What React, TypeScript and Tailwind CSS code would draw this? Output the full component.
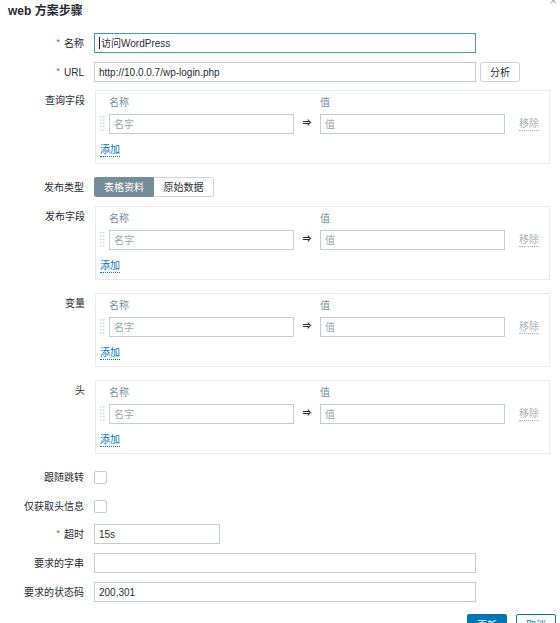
import React from "react";

const FONT = { fontFamily: '"Liberation Sans", Arial, "Noto Sans CJK SC", sans-serif' };

function Label({ text, req, top }: { text: string; req?: boolean; top?: boolean }) {
  return (
    <div
      className={`w-[85px] shrink-0 pr-[1px] flex justify-end ${top ? "items-start pt-[4px] h-[14px] leading-[14px] box-content" : "items-center h-[20px]"} text-[10px] text-[#1f2c33]`}
    >
      {req && <span className="text-[#e33734] mr-[4px] text-[9px]">*</span>}
      <span>{text}</span>
    </div>
  );
}

function TextInput({
  value,
  placeholder,
  w,
  focus,
}: {
  value?: string;
  placeholder?: string;
  w: string;
  focus?: boolean;
}) {
  return (
    <div
      className={`${w} h-[20px] border ${focus ? "border-[#4796c4]" : "border-[#c3ccd1]"} bg-white flex items-center px-[4px] text-[10px] ${value ? "text-[#1f2c33]" : "text-[#9aa5ab]"}`}
    >
      {focus && <span className="w-px h-[12px] bg-[#1f2c33] mr-px" />}
      {value ?? placeholder}
    </div>
  );
}

function DragHandle() {
  const dots = [];
  for (let r = 0; r < 5; r++) {
    for (let c = 0; c < 2; c++) {
      dots.push(<rect key={`${r}-${c}`} x={c * 3} y={r * 3.3} width="1.5" height="1.5" fill="#cdd4d8" />);
    }
  }
  return (
    <svg width="5" height="16" viewBox="0 0 5 16" className="shrink-0">
      {dots}
    </svg>
  );
}

function PairBox() {
  return (
    <div className="w-[455px] h-[74px] border border-[#e8ecee] bg-white pt-[4px] box-border">
      <div className="flex h-[14px] items-center text-[10px] text-[#768d99]">
        <span className="ml-[13px] w-[211px]">名称</span>
        <span>值</span>
      </div>
      <div className="mt-[5px] flex items-center h-[20px]">
        <div className="ml-[4px] mr-[4px] flex items-center">
          <DragHandle />
        </div>
        <TextInput placeholder="名字" w="w-[185px]" />
        <span className="w-[26px] text-center text-[9px] font-bold text-[#1f2c33]">⇒</span>
        <TextInput placeholder="值" w="w-[185px]" />
        <span className="ml-[14px] text-[10px] text-[#aab3b8] leading-[12px] border-b border-dotted border-[#aab3b8]">
          移除
        </span>
      </div>
      <div className="mt-[9px] h-[14px] flex items-center ml-[4px]">
        <span className="text-[10px] text-[#0275b8] leading-[12px] border-b border-dotted border-[#0275b8]">添加</span>
      </div>
    </div>
  );
}

function Checkbox() {
  return <div className="w-[13px] h-[13px] border border-[#bfc9cf] rounded-[2px] bg-white" />;
}

function Row({ children, className = "" }: { children: React.ReactNode; className?: string }) {
  return <div className={`flex gap-[9px] ${className}`}>{children}</div>;
}

export default function App() {
  return (
    <div className="relative w-[560px] h-[623px] overflow-hidden bg-white" style={FONT}>
      <div className="absolute right-[3px] top-[-6px] text-[13px] leading-[13px] text-[#9aa5ab]">×</div>
      <div className="h-[22px] flex items-center pl-[8px] text-[12px] font-bold text-[#1f2c33]">web 方案步骤</div>

      <Row className="mt-[11px] items-center">
        <Label text="名称" req />
        <TextInput value="访问WordPress" w="w-[382px]" focus />
      </Row>

      <Row className="mt-[9px] items-center">
        <Label text="URL" req />
        <div className="flex gap-[4px]">
          <TextInput value="http://10.0.0.7/wp-login.php" w="w-[382px]" />
          <div className="w-[40px] h-[20px] border border-[#c9d1d5] rounded-[2px] bg-white flex items-center justify-center text-[10px] text-[#1f2c33]">
            分析
          </div>
        </div>
      </Row>

      <Row className="mt-[8px]">
        <Label text="查询字段" top />
        <PairBox />
      </Row>

      <Row className="mt-[13px] items-center">
        <Label text="发布类型" />
        <div className="flex h-[20px] text-[10px]">
          <div className="w-[60px] flex items-center justify-center bg-[#768d99] border border-[#768d99] text-white rounded-l-[2px]">
            表格资料
          </div>
          <div className="w-[60px] flex items-center justify-center bg-white border border-l-0 border-[#cfd6da] text-[#1f2c33] rounded-r-[2px]">
            原始数据
          </div>
        </div>
      </Row>

      <Row className="mt-[9px]">
        <Label text="发布字段" top />
        <PairBox />
      </Row>

      <Row className="mt-[13px]">
        <Label text="变量" top />
        <PairBox />
      </Row>

      <Row className="mt-[13px]">
        <Label text="头" top />
        <PairBox />
      </Row>

      <Row className="mt-[13px] items-center">
        <Label text="跟随跳转" />
        <Checkbox />
      </Row>

      <Row className="mt-[9px] items-center">
        <Label text="仅获取头信息" />
        <Checkbox />
      </Row>

      <Row className="mt-[8px] items-center">
        <Label text="超时" req />
        <TextInput value="15s" w="w-[126px]" />
      </Row>

      <Row className="mt-[9px] items-center">
        <Label text="要求的字串" />
        <TextInput value="" w="w-[382px]" />
      </Row>

      <Row className="mt-[9px] items-center">
        <Label text="要求的状态码" />
        <TextInput value="200,301" w="w-[382px]" />
      </Row>

      <div className="mt-[12px] flex justify-end gap-[9px] pr-[4px]">
        <div className="w-[40px] h-[22px] rounded-[2px] bg-[#0275b8] border border-[#0275b8] text-white text-[10px] flex items-center justify-center">
          更新
        </div>
        <div className="w-[40px] h-[22px] rounded-[2px] bg-white border border-[#0275b8] text-[#0275b8] text-[10px] flex items-center justify-center">
          取消
        </div>
      </div>
    </div>
  );
}
